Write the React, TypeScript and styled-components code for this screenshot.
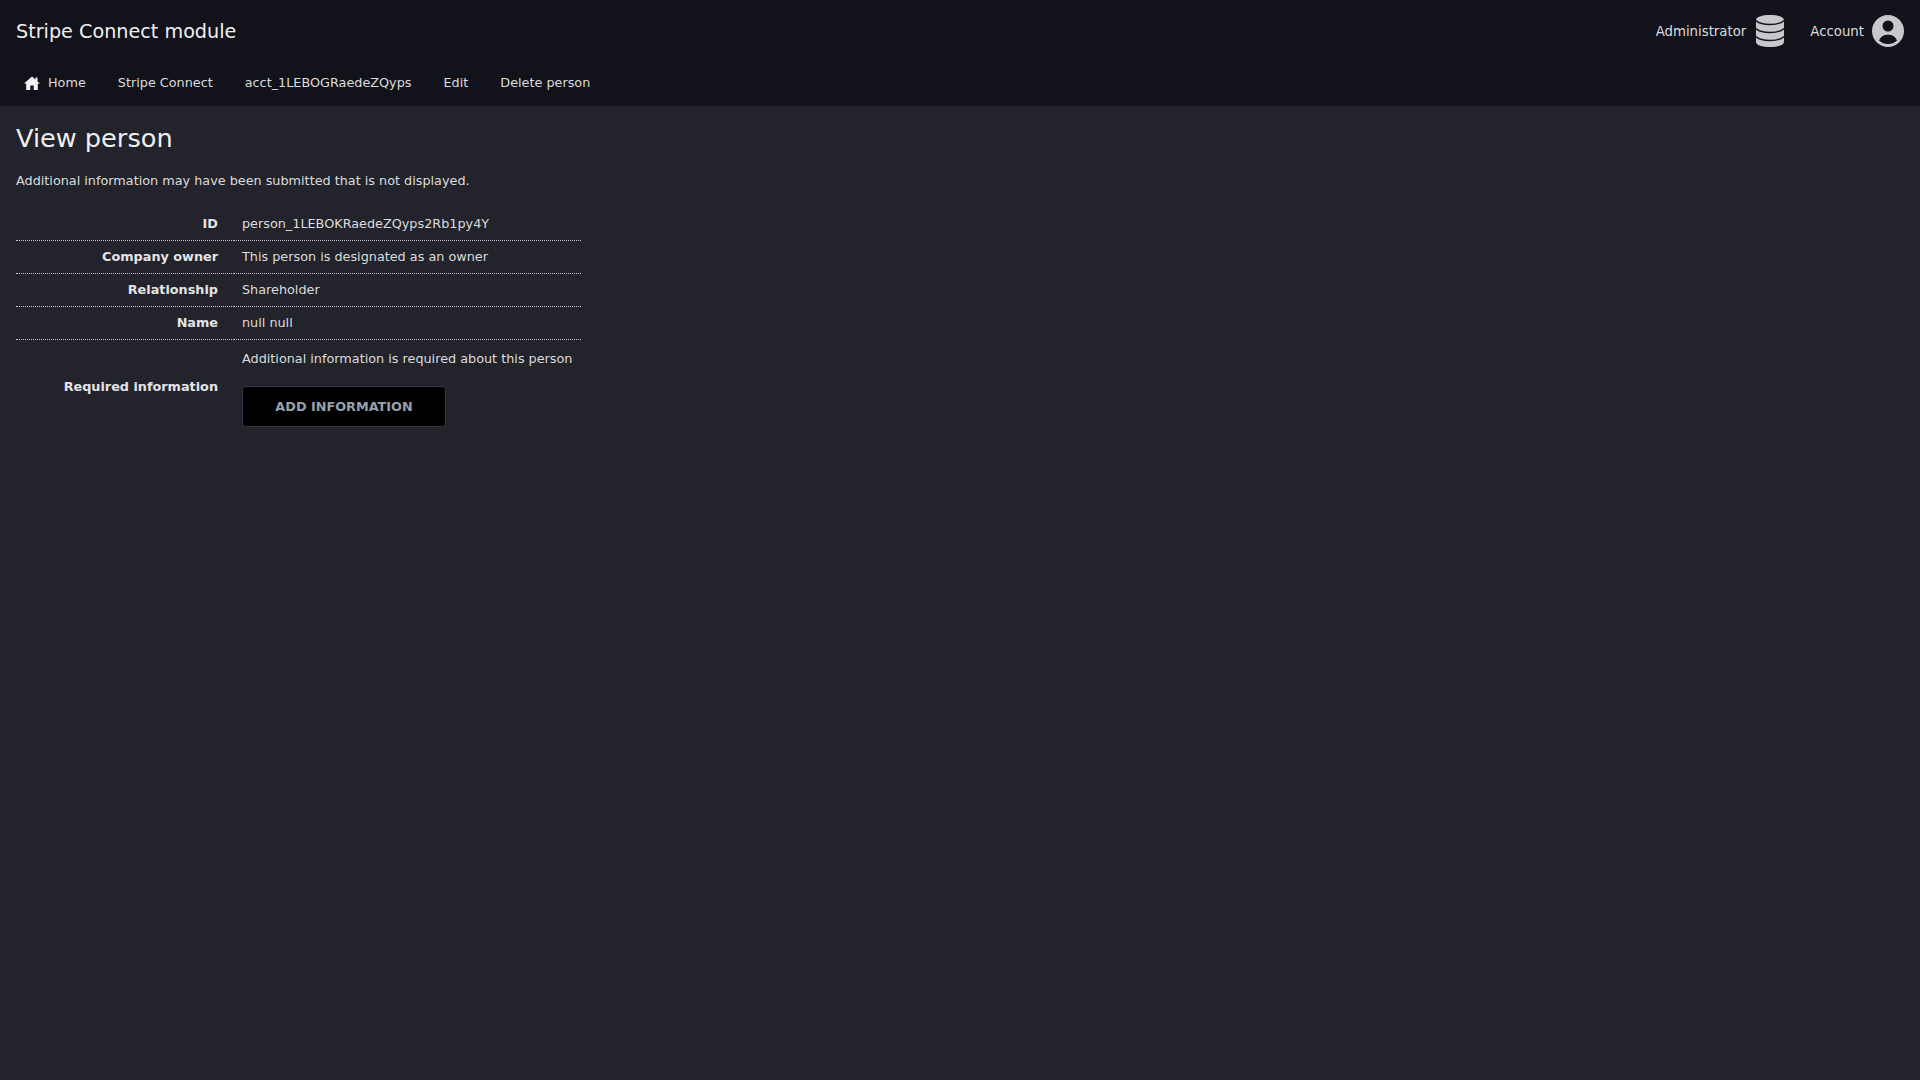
import React from "react";
import styled, { createGlobalStyle } from "styled-components";

const GlobalStyle = createGlobalStyle`
  html, body {
    margin: 0;
    min-height: 100%;
    background: #22232b;
  }
  body {
    font-family: "DejaVu Sans", sans-serif;
    font-size: 12.8px;
    color: #e4e4e6;
  }
`;

const Header = styled.header`
  background: #11121a;
  height: 106px;
  box-sizing: border-box;
  padding: 0 16px;
`;

const TopRow = styled.div`
  display: flex;
  align-items: center;
  justify-content: space-between;
  height: 62px;
`;

const Brand = styled.div`
  font-size: 19.2px;
  color: #f0f0f2;
`;

const UserMenu = styled.div`
  display: flex;
  align-items: center;
  gap: 26px;
`;

const UserItem = styled.div<{ $gap: number }>`
  display: flex;
  align-items: center;
  gap: ${(p) => p.$gap}px;
  font-size: 13.3px;
  color: #dcdcde;
  svg {
    display: block;
  }
`;

const Nav = styled.nav`
  display: flex;
  align-items: center;
  gap: 32px;
  height: 41px;
  padding-left: 8px;
`;

const NavLink = styled.a`
  display: flex;
  align-items: center;
  gap: 8px;
  color: #dcdcde;
  svg {
    display: block;
  }
`;

const Main = styled.main`
  padding: 16px 16px 0;
`;

const Title = styled.h1`
  margin: 0;
  font-size: 25.6px;
  line-height: 33px;
  font-weight: 400;
  color: #f0f0f2;
`;

const Intro = styled.p`
  margin: 17px 0 0;
  line-height: 18px;
  color: #dcdcde;
`;

const Details = styled.table`
  margin-top: 18px;
  border-collapse: collapse;
`;

const Row = styled.tr`
  & + & th,
  & + & td {
    border-top: 1px dotted #c8c8cc;
  }
`;

const Label = styled.th`
  padding: 8px 16px 8px 0;
  text-align: right;
  font-weight: 700;
  line-height: 16px;
  color: #e4e4e6;
  width: 218px;
  box-sizing: border-box;
`;

const Value = styled.td<{ $tight?: boolean }>`
  padding: 8px 9px ${(p) => (p.$tight ? 6 : 8)}px 8px;
  line-height: 16px;
  color: #dcdcde;
`;

const Note = styled.div`
  margin-bottom: 19px;
  padding-top: 3px;
`;

const ActionButton = styled.button`
  display: block;
  width: 204px;
  height: 41px;
  padding: 0 0 1px;
  background: #000;
  border: 1px solid #34363f;
  border-radius: 3px;
  color: #97a1ad;
  font: 700 12.8px "DejaVu Sans", sans-serif;
`;

const HomeIcon = () => (
  <svg width="16" height="16" viewBox="0 0 16 16" fill="#f4f4f6">
    <path d="M8 1.5 0 8.6h2.2V15h4.1v-4.4h3.4V15h4.1V8.6H16l-2.5-2.2V2.6h-2v2z" />
  </svg>
);

const DatabaseIcon = () => (
  <svg width="28" height="32" viewBox="0 0 28 32">
    <path
      fill="#c8c8cc"
      d="M0 5C0 2 6 0 14 0s14 2 14 5v22c0 3-6 5-14 5S0 30 0 27z"
    />
    <g fill="none" stroke="#11121a" strokeWidth="1.4">
      <path d="M0 5.5C3 8.5 9 9.5 14 9.5s11-1 14-4" />
      <path d="M0 13.5c3 3 9 4 14 4s11-1 14-4" />
      <path d="M0 21.5c3 3 9 4 14 4s11-1 14-4" />
    </g>
  </svg>
);

const AccountIcon = () => (
  <svg width="32" height="32" viewBox="0 0 32 32">
    <circle cx="16" cy="16" r="16" fill="#c8c8cc" />
    <circle cx="16" cy="11" r="5.5" fill="#11121a" />
    <path
      fill="#11121a"
      d="M7 25.5C9 21 12 19.8 16 19.8s7 1.2 9 5.7c-2.5 2.3-5.5 3.6-9 3.6s-6.5-1.3-9-3.6z"
    />
  </svg>
);

const rows = [
  { label: "ID", value: "person_1LEBOKRaedeZQyps2Rb1py4Y" },
  { label: "Company owner", value: "This person is designated as an owner" },
  { label: "Relationship", value: "Shareholder" },
  { label: "Name", value: "null null" },
];

export default function App() {
  return (
    <>
      <GlobalStyle />
      <Header>
        <TopRow>
          <Brand>Stripe Connect module</Brand>
          <UserMenu>
            <UserItem $gap={10}>
              Administrator
              <DatabaseIcon />
            </UserItem>
            <UserItem $gap={8}>
              Account
              <AccountIcon />
            </UserItem>
          </UserMenu>
        </TopRow>
        <Nav>
          <NavLink>
            <HomeIcon />
            Home
          </NavLink>
          <NavLink>Stripe Connect</NavLink>
          <NavLink>acct_1LEBOGRaedeZQyps</NavLink>
          <NavLink>Edit</NavLink>
          <NavLink>Delete person</NavLink>
        </Nav>
      </Header>
      <Main>
        <Title>View person</Title>
        <Intro>Additional information may have been submitted that is not displayed.</Intro>
        <Details>
          <tbody>
            {rows.map((row) => (
              <Row key={row.label}>
                <Label>{row.label}</Label>
                <Value>{row.value}</Value>
              </Row>
            ))}
            <Row>
              <Label>Required information</Label>
              <Value $tight>
                <Note>Additional information is required about this person</Note>
                <ActionButton>ADD INFORMATION</ActionButton>
              </Value>
            </Row>
          </tbody>
        </Details>
      </Main>
    </>
  );
}
